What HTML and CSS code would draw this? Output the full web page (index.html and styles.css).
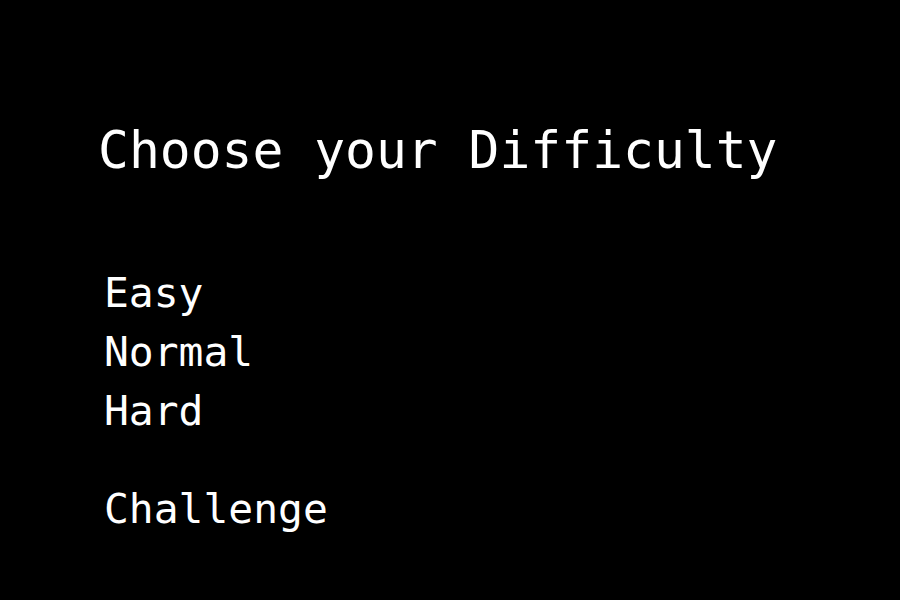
FILE: index.html
```html
<!DOCTYPE html>
<html>
<head>
<meta charset="utf-8">
<link rel="stylesheet" href="styles.css">
</head>
<body>
<main class="screen">
  <h1 class="title">Choose your Difficulty</h1>
  <ul class="menu">
    <li class="item">Easy</li>
    <li class="item">Normal</li>
    <li class="item">Hard</li>
    <li class="item challenge">Challenge</li>
  </ul>
</main>
</body>
</html>
```
FILE: styles.css
```css
html, body {
  margin: 0;
  padding: 0;
  background: #000;
  color: #fff;
  font-family: "DejaVu Sans Mono", monospace;
}
.screen {
  width: 900px;
  height: 600px;
  box-sizing: border-box;
  padding: 120px 0 0 98px;
}
.title {
  margin: 0;
  font-size: 51.3px;
  font-weight: normal;
  line-height: 60px;
}
.menu {
  list-style: none;
  margin: 84px 0 0 6px;
  padding: 0;
}
.item {
  font-size: 41.3px;
  line-height: 59px;
}
.challenge {
  margin-top: 39px;
}
```
